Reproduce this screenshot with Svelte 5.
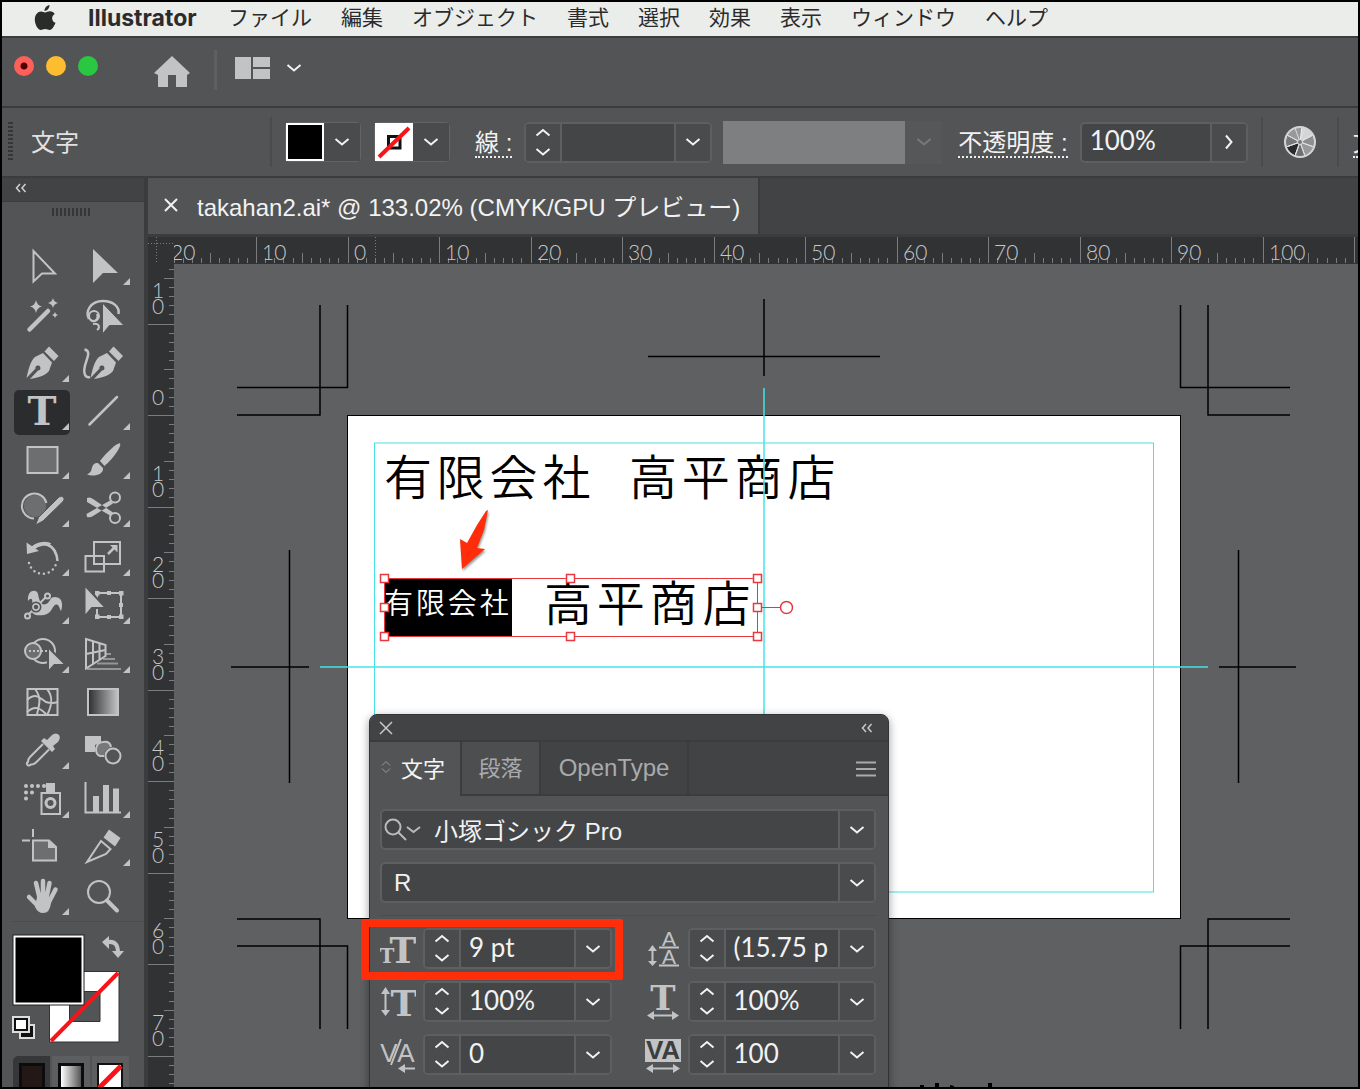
<script lang="ts">
	const menus = ['ファイル', '編集', 'オブジェクト', '書式', '選択', '効果', '表示', 'ウィンドウ', 'ヘルプ'];

	// one ruler unit (10mm) in px, and where 0 sits inside each ruler
	const UNIT = 91.5;
	const ZERO_X = 174.5;
	const ZERO_Y = 152;

	let innerWidth = $state(1360);
	let innerHeight = $state(1089);

	type Tick = { pos: number; kind: number };

	function ticks(zero: number, from: number, to: number): Tick[] {
		const list: Tick[] = [];
		for (let i = from * 10; i <= to * 10; i++) {
			const kind = i % 10 === 0 ? 2 : i % 5 === 0 ? 1 : 0;
			list.push({ pos: Math.round(zero + (i * UNIT) / 10) + 0.5, kind });
		}
		return list;
	}

	function range(from: number, to: number): number[] {
		return Array.from({ length: Math.max(0, to - from + 1) }, (_, i) => i + from);
	}

	const lastX = $derived(Math.floor((innerWidth - 400) / UNIT));
	const lastY = $derived(Math.floor((innerHeight - 418) / UNIT));
	const hTicks = $derived(ticks(ZERO_X - 1, -2, lastX + 2));
	const vTicks = $derived(ticks(ZERO_Y - 1, -2, lastY + 2));
	const hLabels = $derived(range(-2, lastX));
	const vLabels = $derived(range(-1, lastY));

	const F = 'fill="currentColor" stroke="none"';

	const tools = [
		{ name: '選択', sub: false, art: `<path d="M21.5 8V38.500L30 30.500H43Z"/>` },
		{ name: 'ダイレクト選択', sub: true, art: `<path ${F} d="M20 6V40L30 30H45Z"/>` },
		{
			name: '自動選択',
			sub: false,
			art: `<path d="M17.500 37.500L36 19" stroke-width="4.500" stroke-linecap="round"/><path ${F} d="M24 8q1 5.500 6 6.500q-5 1-6 6.500q-1-5.500-6-6.500q5-1 6-6.500zM41 6q.8 4 5 5q-4.200 1-5 5q-.8-4-5-5q4.200-1 5-5zM43 20q.5 2.500 3 3q-2.500.500-3 3q-.500-2.500-3-3q2.500-.500 3-3z"/>`
		},
		{
			name: 'なげなわ',
			sub: false,
			art: `<path d="M16 27C12 20 17 9 30 9C40 9 47 15 45.500 22" stroke-width="2.500"/><circle cx="21" cy="24" r="5"/><path d="M17 27C20 32 26 28 24 22M20 32C27 31 27 36 24 38"/><path fill="currentColor" stroke="#535456" stroke-width="1" d="M29.500 11V42L36.500 33.500H51Z"/>`
		},
		{
			name: 'ペン',
			sub: true,
			art: `<path ${F} d="M14.500 38C16 32 18 21 23 17L31 13L40 22.500L37 31C33 36 25 38 18 39L26 30.500A2.500 2.500 0 1 0 23.500 28.500Z"/><path ${F} d="M37 6.500L46.500 16L42 21L32.500 11.500Z"/>`
		},
		{
			name: '曲線',
			sub: false,
			art: `<path d="M11.500 9.500C21 11 9 25 11.500 33C12 36 14 38 17 37" stroke-width="2.500"/><path ${F} d="M17.500 38C19 32 21 21 26 17L34 13L43 22.500L40 31C36 36 28 38 21 39L29 30.500A2.500 2.500 0 1 0 26.500 28.500Z"/><path ${F} d="M40.500 6.500L50 16L45.500 21L36 11.500Z"/>`
		},
		{ name: '文字', sub: true, active: true, glyph: 'T', art: '' },
		{ name: '直線', sub: true, art: `<path d="M16.500 36.500L44 9" stroke-width="2.500" stroke-linecap="round"/>` },
		{ name: '長方形', sub: true, art: `<rect x="15.500" y="10" width="30" height="26" fill="#6d6e70"/>` },
		{
			name: 'ブラシ',
			sub: true,
			art: `<path ${F} d="M47 6.500C45 5 34 15 27 24L31.500 29C40 22 49 9 47 6.500ZM25 26C19 25 19 32 18 34C17 36 15 37 14 37.500C20 40 31 38 30 31Z"/>`
		},
		{
			name: 'Shaper',
			sub: true,
			art: `<circle cx="23" cy="21" r="11" fill="#6d6e70" stroke="none"/><path d="M22 33.500A12.500 12.500 0 1 1 34.500 18"/><path fill="currentColor" stroke="#535456" stroke-width="1" d="M23.500 40L26.500 32.500L47 12Q50 10 52 13Q52.500 15 51 16.500L31 36Z"/>`
		},
		{
			name: 'はさみ',
			sub: true,
			art: `<circle cx="42" cy="12.500" r="5"/><circle cx="42" cy="33" r="5"/><path ${F} d="M14 13Q17 11.500 20 14L40 27.500L37 30.500L14 17ZM14 32Q17 33 20 31L40 18.500L37 15.500L13.500 29Z"/>`
		},
		{
			name: '回転',
			sub: true,
			art: `<path d="M19 15C28 5 44 9 45.500 27" stroke-width="2.500"/><path d="M21 14C27 9 35 9 38 11" stroke-width="4"/><path ${F} d="M14.500 8.500L15 20L27 17Z"/><path d="M17 29A14 14 0 0 0 44 30" stroke-dasharray="0 5" stroke-width="2.500" stroke-linecap="round"/>`
		},
		{
			name: '拡大・縮小',
			sub: true,
			art: `<rect x="21" y="8" width="26" height="22"/><rect x="12.500" y="22" width="18.500" height="15.500"/><path d="M35 20L42 13" stroke-width="2.500"/><path ${F} d="M37 11H44.500V18.500Z"/>`
		},
		{
			name: '線幅',
			sub: true,
			art: `<path ${F} d="M16 19C15 7 25 7 26 12C27 18 29 24 34 22C39 20 37 15 43 15C51 15 51 24 49 29C47 26 47 21 43 23C40 25 39 32 32 33C24 34 18 33 20 25C21 18 20 14 16 19Z"/><path d="M17 32L34 15"/><circle cx="24" cy="25" r="4.500" stroke="#535456"/><circle cx="24" cy="25" r="3" fill="#535456" stroke-width="1.500"/><circle cx="15.500" cy="34" r="2.500" fill="#535456"/><circle cx="35.500" cy="14" r="2.500" fill="#535456"/>`
		},
		{
			name: '自由変形',
			sub: true,
			art: `<rect x="24" y="11" width="24" height="24"/><path ${F} d="M22 9h4.500v4.500H22zM34 9h4v4h-4zM46 9h4.500v4.500H46zM46 21h4v4h-4zM46 32.500h4.500V37H46zM34 33h4v4h-4zM22 32.500h4.500V37H22z"/><path fill="currentColor" stroke="#535456" d="M11.500 3V35L19 26H33Z"/>`
		},
		{
			name: 'シェイプ形成',
			sub: true,
			art: `<circle cx="31" cy="20" r="12"/><circle cx="21" cy="20" r="8" fill="#6d6e70"/><path d="M17 20H37" stroke-dasharray="2 2"/><path fill="currentColor" stroke="#535456" d="M36 16V41L42.500 34H54Z"/>`
		},
		{
			name: '遠近グリッド',
			sub: true,
			art: `<path d="M13 8L32.500 14V25L13 37.500ZM20 10V33M26.500 12V29M13 23L32.500 19" /><path d="M33 23H38M30 28H42M24 32.500H45M14 38H48" stroke-opacity=".6"/>`
		},
		{
			name: 'メッシュ',
			sub: false,
			art: `<rect x="15.500" y="10" width="30" height="26"/><path d="M23 10C31 20 26 28 25 36M35 10C41 17 40 27 35 36M15 21C24 13 28 19 34 23Q40 25 46 23M15 33C23 26 28 29 34 35"/>`
		},
		{
			name: 'グラデーション',
			sub: false,
			art: `<rect x="15" y="10" width="30" height="26" fill="url(#toolGradient)"/>`
		},
		{
			name: 'スポイト',
			sub: true,
			art: `<path d="M31 17L18 30Q16 32 16 35Q14 36 15.500 38Q17.500 39 19 37.500Q22 37.500 24 35.500L37 22.500" /><path ${F} d="M29 14L32 11L35 13L40 8Q44 5 47 8Q49 11 46 15L41 19L43 22L40 25Z"/>`
		},
		{
			name: 'ブレンド',
			sub: false,
			art: `<path ${F} d="M12 9H28V15L22 18V25H12Z"/><path fill="#77787a" d="M34 29H27Q23 28 23 22Q24 15 30 15Q37 14 38 20"/><circle cx="40" cy="29" r="9" fill="#535456" stroke="none"/><circle cx="40" cy="29" r="7.500"/>`
		},
		{
			name: 'シンボルスプレー',
			sub: true,
			art: `<rect x="29.500" y="17" width="18.500" height="21"/><circle cx="38.500" cy="27" r="4.500" stroke-width="3"/><path ${F} d="M34 7H43V16H34Z"/><path d="M14 10H34M14 16.500H21M14 22.500H15" stroke-width="4" stroke-linecap="round" stroke-dasharray="0 6"/>`
		},
		{
			name: '棒グラフ',
			sub: true,
			art: `<path d="M12.500 6V36.500H48"/><path ${F} d="M20 20h6v17h-6zM30 9h6v28h-6zM40 12.500h6V37h-6z"/>`
		},
		{
			name: 'アートボード',
			sub: false,
			art: `<path d="M21 16.500H37L44 23V36.500H21Z" fill="#6d6e70"/><path ${F} d="M36 16L44.500 24H36Z"/><path d="M21 5V13M10 16.500H18"/>`
		},
		{
			name: 'スライス',
			sub: true,
			art: `<path d="M14 38L28 17L37.500 25L33 30Z"/><path ${F} d="M36 5.500L47.500 14L42 22.500L30.500 13.500Z"/>`
		},
		{
			name: '手のひら',
			sub: true,
			art: `<path d="M28 27L24 10M31 26L31 8M34 27L37.500 10M37 29L43.500 16.500M26 33L17 24" stroke-width="4.500" stroke-linecap="round"/><path ${F} d="M25 24L38 24L39 30Q38 40 31 40Q26 40 23 34Z"/>`
		},
		{
			name: 'ズーム',
			sub: false,
			art: `<circle cx="26" cy="19" r="11"/><path d="M34 27.500L44 37.500" stroke-width="4" stroke-linecap="round"/>`
		}
	];

	const fields = [
		{ id: 'size', label: 'フォントサイズ', value: '9 pt' },
		{ id: 'leading', label: '行送り', value: '(15.75 p' },
		{ id: 'vscale', label: '垂直比率', value: '100%' },
		{ id: 'hscale', label: '水平比率', value: '100%' },
		{ id: 'kerning', label: 'カーニング', value: '0' },
		{ id: 'tracking', label: 'トラッキング', value: '100' }
	];

	const handles = [
		[384, 578], [570, 578], [757, 578],
		[384, 607], [757, 607],
		[384, 636], [570, 636], [757, 636]
	];
</script>

<svelte:window bind:innerWidth bind:innerHeight />

{#snippet chevron()}
	<svg class="chev" viewBox="0 0 16 10"><path d="M1.500 2L8 7.500L14.500 2" /></svg>
{/snippet}

{#snippet stepper(label: string)}
	<span class="stepper">
		<button aria-label="{label}を増やす"><svg class="chev" viewBox="0 0 16 10"><path d="M1.500 7.500L8 2L14.500 7.500" /></svg></button>
		<button aria-label="{label}を減らす">{@render chevron()}</button>
	</span>
{/snippet}

<div class="screen">
	<nav class="menubar">
		<svg class="apple" viewBox="0 0 22 26">
			<path d="M15.500 0C15.700 3 13 6 10.500 6C10.200 3.200 13 .4 15.500 0ZM11 7.500C12.500 7.500 13.800 6.300 16 6.300C18 6.300 19.800 7.400 20.700 8.900C17 11 17.500 16.200 21.500 17.800C20.500 20.700 18 25 15.800 25C14 25 13.500 24 11.200 24C9 24 8.300 25 6.700 25C4 25 .8 19.500 .8 14.500C.8 9.500 4 6.500 7 6.500C8.800 6.500 10 7.500 11 7.500Z" />
		</svg>
		<a class="app-name" href="#app">Illustrator</a>
		{#each menus as menu}
			<a href="#app">{menu}</a>
		{/each}
	</nav>

	<header class="appbar">
		<div class="lights">
			<button class="close" aria-label="閉じる"></button>
			<button class="min" aria-label="しまう"></button>
			<button class="max" aria-label="拡大"></button>
		</div>
		<button class="home" aria-label="ホーム">
			<svg width="36" height="32" viewBox="0 0 36 32"><path d="M18 0L36 17L33 19V31H22V19H14V31H4V19L0 17Z" /></svg>
		</button>
		<i class="rule"></i>
		<button class="workspace" aria-label="ワークスペース">
			<svg width="36" height="24" viewBox="0 0 36 24"><path d="M0 1H16V23H0ZM18 1H35V11H18ZM18 13H35V23H18Z" /></svg>
			{@render chevron()}
		</button>
	</header>

	<div class="control">
		<i class="grip"></i>
		<span class="mode">文字</span>
		<i class="rule"></i>
		<div class="paint">
			<button class="swatch solid" aria-label="塗り"></button>
			<button class="drop" aria-label="塗りのスウォッチ">{@render chevron()}</button>
		</div>
		<div class="paint">
			<button class="swatch" aria-label="線">
				<svg width="38" height="38" viewBox="0 0 38 38">
					<path d="M13.500 13.500H25V25H13.500Z" fill="none" stroke="#111" stroke-width="3" />
					<path d="M4 34L34 5" stroke="#f5141a" stroke-width="4" />
				</svg>
			</button>
			<button class="drop" aria-label="線のスウォッチ">{@render chevron()}</button>
		</div>
		<label class="dotted" for="stroke-width">線 :</label>
		<div class="field stroke">
			{@render stepper('線幅')}
			<input id="stroke-width" type="text" />
			<button class="drop" aria-label="線幅の一覧">{@render chevron()}</button>
		</div>
		<div class="profile">
			<span></span>
			<button aria-label="可変線幅プロファイル" disabled>{@render chevron()}</button>
		</div>
		<label class="dotted" for="opacity">不透明度 :</label>
		<div class="field opacity">
			<input id="opacity" type="text" value="100%" />
			<button class="drop" aria-label="不透明度スライダー">
				<svg class="next" viewBox="0 0 10 16"><path d="M2 1.500L7.500 8L2 14.500" /></svg>
			</button>
		</div>
		<i class="rule"></i>
		<button class="recolor" aria-label="オブジェクトを再配色">
			<svg width="34" height="34" viewBox="0 0 34 34">
				<circle cx="17" cy="17" r="15" fill="#98999b" />
				<path d="M17 17L19 2A15 15 0 0 1 30 10Z" fill="#d4d5d6" />
				<path d="M17 17L30 10A15 15 0 0 1 31 22Z" fill="#8d8e90" />
				<path d="M17 17L12 31A15 15 0 0 1 3 22Z" fill="#2a2b2d" />
				<path d="M17 17L22 31A15 15 0 0 1 12 31Z" fill="#6f7072" />
				<path d="M17 17L3 22A15 15 0 0 1 4 10Z" fill="#77787a" />
				<path d="M17 17L12 3M17 17L22 3M17 17L30 10M17 17L31 22M17 17L22 31M17 17L12 31M17 17L3 22M17 17L4 10" stroke="#dcdddd" />
				<circle cx="17" cy="17" r="15" fill="none" stroke="#d2d3d4" stroke-width="2" />
				<circle cx="17" cy="17" r="2.500" fill="#77787a" stroke="#dcdddd" />
			</svg>
		</button>
		<i class="rule"></i>
		<a class="dotted more" href="#app">文字 :</a>
	</div>

	<main>
		<aside class="tools">
			<button class="collapse" aria-label="パネルを折りたたむ">
				<svg width="12" height="10" viewBox="0 0 12 10"><path d="M5 1L1.500 5L5 9M10.500 1L7 5L10.500 9" /></svg>
			</button>
			<i class="grip wide"></i>
			<div class="grid">
				{#each tools as tool}
					<button class="tool" class:active={tool.active} aria-label={tool.name}>
						<svg viewBox="0 0 61 48">
							<defs>
								<linearGradient id="toolGradient">
									<stop offset="0" stop-color="#2c2d2f" />
									<stop offset="1" stop-color="#c2c3c5" />
								</linearGradient>
							</defs>
							{@html tool.art}
							{#if tool.glyph}<text x="30" y="37" text-anchor="middle">{tool.glyph}</text>{/if}
							{#if tool.sub}<path class="corner" d="M57 35V42H50Z" />{/if}
						</svg>
					</button>
				{/each}
			</div>
			<div class="colors">
				<svg width="122" height="120" viewBox="12 928 122 120">
					<path d="M49.500 971.500H119V1042H49.500ZM69.500 991.500V1021.500H100V991.500Z" fill="#fff" fill-rule="evenodd" stroke="#333" stroke-width="1" />
					<path d="M51 1041L118 973" stroke="#f5141a" stroke-width="4" />
					<rect x="13.500" y="935.500" width="70" height="69" fill="#000" stroke="#222" />
					<rect x="14.500" y="936.500" width="68" height="67" fill="none" stroke="#fff" stroke-width="2" />
					<path d="M108 942C116 941 118 946 118 953" fill="none" stroke="#c2c3c5" stroke-width="4" />
					<path d="M102 942L109 936V949ZM112 951H124L118 958Z" fill="#c2c3c5" stroke="none" />
					<path d="M20 1025H34V1038H20Z" fill="#111" stroke="#ddd" />
					<path d="M13 1017H29V1032H13Z" fill="#111" stroke="#ddd" />
					<path d="M16 1020H26V1029H16Z" fill="#fff" stroke="none" />
				</svg>
			</div>
			<div class="fills">
				<button class="on" aria-label="カラー"><i class="c"></i></button>
				<button aria-label="グラデーション"><i class="g"></i></button>
				<button aria-label="なし">
					<svg width="26" height="40" viewBox="0 0 26 40"><rect x="1" y="1" width="24" height="38" fill="#fff" stroke="#111" stroke-width="2" /><path d="M2 25L24 3" stroke="#f5141a" stroke-width="5" /></svg>
				</button>
			</div>
		</aside>

		<section class="document">
			<div class="tabs">
				<div class="tab">
					<button aria-label="ファイルを閉じる"><svg width="14" height="14" viewBox="0 0 14 14"><path d="M1 1L13 13M13 1L1 13" /></svg></button>
					<span>takahan2.ai* @ 133.02% (CMYK/GPU プレビュー)</span>
				</div>
			</div>
			<div class="work">
				<svg class="ruler corner-box"><path d="M0 6.500H26M8.500 0V26" stroke-dasharray="1 2" /></svg>
				<svg class="ruler h">
					{#each hTicks as t}
						<path d="M{t.pos} {[21, 16, 0][t.kind]}V26" />
					{/each}
					<path d="M201.500 0V26" stroke-dasharray="1 2" />
					{#each hLabels as n}
						<text x={Math.round(ZERO_X + n * UNIT) + 5} y="23">{Math.abs(n * 10)}</text>
					{/each}
				</svg>
				<svg class="ruler v">
					{#each vTicks as t}
						<path d="M{[21, 16, 0][t.kind]} {t.pos}H26" />
					{/each}
					{#each vLabels as n}
						{#each String(Math.abs(n * 10)).split('').reverse() as digit, k}
							<text x="10" y={Math.round(ZERO_Y + n * UNIT) - 11 - k * 16} text-anchor="middle">{digit}</text>
						{/each}
					{/each}
				</svg>
				<div class="canvas">
					<svg class="art" width="1184" height="824" viewBox="174 264 1184 824">
						<rect x="347.500" y="415.500" width="833" height="503" fill="#fff" stroke="#000" stroke-width="1" />
						<!-- trim marks -->
						<g class="marks">
							<path d="M320 305V415H237M347.500 305V387.500H237" />
							<path d="M1180.500 305V387.500H1290M1208 305V415H1290" />
							<path d="M237 919H320V1029M237 946H347.500V1029" />
							<path d="M1290 919H1208V1029M1290 946H1180.500V1029" />
							<path d="M764 299V376M648 356.500H880" />
							<path d="M231 667H309M289.500 550V783" />
							<path d="M1219 667H1296M1238.500 550V783" />
						</g>
						<text class="title" x="384" y="495">有限会社<tspan x="629">高平商店</tspan></text>
						<rect x="385" y="579" width="127" height="57" />
						<text class="title small" x="384" y="614">有限会社</text>
						<text class="title" x="544" y="621">高平商店</text>
						<g class="guides">
							<rect x="374.500" y="443" width="779" height="449" stroke-width="1" />
							<path d="M764 388V946M320 667H1208" />
						</g>
						<g class="bounds">
							<path d="M384.500 578.500H757.500V636.500H384.500ZM757 607.500H780" />
							{#each handles as [x, y]}
								<rect x={x - 3.5} y={y - 3.5} width="8" height="8" />
							{/each}
							<circle cx="786.500" cy="607.500" r="6" />
						</g>
						<path class="pointer" d="M488 510L484 530L477 548L485 549L462 569L460 539L467 543L477 525L486 511Z" />
						<path d="M920 1085h4v3h-4zM935 1083h4v5h-4zM950 1085l4 1v2h-4zM988 1083h4v5h-4z" />
					</svg>

					<div class="panel">
						<div class="panel-bar">
							<button aria-label="パネルを閉じる"><svg width="14" height="14" viewBox="0 0 14 14"><path d="M1 1L13 13M13 1L1 13" /></svg></button>
							<button aria-label="アイコンパネル化"><svg width="12" height="10" viewBox="0 0 12 10"><path d="M5 1L1.500 5L5 9M10.500 1L7 5L10.500 9" /></svg></button>
						</div>
						<div class="panel-tabs">
							<button class="current">
								<svg width="10" height="14" viewBox="0 0 10 14"><path d="M1 5.500L5 1.500L9 5.500M1 8.500L5 12.500L9 8.500" /></svg>文字
							</button>
							<button class="para">段落</button>
							<button class="ot">OpenType</button>
							<button class="burger" aria-label="パネルメニュー"><svg width="22" height="16" viewBox="0 0 22 16"><path d="M1 1.500H21M1 8H21M1 14.500H21" /></svg></button>
						</div>
						<div class="panel-body">
							<div class="field">
								<button class="search" aria-label="フォントを検索">
									<svg width="38" height="24" viewBox="0 0 38 24"><circle cx="10" cy="9" r="7.500" /><path d="M15.500 14.500L23 22M24 9L30.500 14L37 9" /></svg>
								</button>
								<input type="text" aria-label="フォントファミリ" value="小塚ゴシック Pro" />
								<button class="drop" aria-label="フォントの一覧">{@render chevron()}</button>
							</div>
							<div class="field">
								<select aria-label="フォントスタイル"><option>R</option></select>
								<span class="drop">{@render chevron()}</span>
							</div>
							<hr />
							<div class="values">
								{#each fields as f}
									<div class="value">
										<label for={f.id} aria-label={f.label}>
											<svg width="36" height="38" viewBox="0 0 36 38">
												{#if f.id === 'size'}
													<text class="slab" x="23" y="33" font-size="36" text-anchor="middle">T</text>
													<text class="slab" x="7" y="33" font-size="20" text-anchor="middle">T</text>
												{:else if f.id === 'leading'}
													<text class="thin" x="24" y="16" font-size="21" text-anchor="middle">A</text>
													<text class="thin" x="24" y="34" font-size="21" text-anchor="middle">A</text>
													<path d="M14 17.500H34M14 35.500H34M7.500 18V33" /><path class="tip" d="M3 21L7.500 15L12 21ZM3 31L7.500 36L12 31Z" />
												{:else if f.id === 'vscale'}
													<text class="slab" x="24" y="33" font-size="36" text-anchor="middle">T</text>
													<path d="M5.500 8V30" /><path class="tip" d="M1 11L5.500 4L10 11ZM1 27L5.500 33L10 27Z" />
												{:else if f.id === 'hscale'}
													<text class="slab" x="18" y="27" font-size="34" text-anchor="middle">T</text>
													<path d="M6 32.500H30" /><path class="tip" d="M9 28L2 32.500L9 37ZM27 28L34 32.500L27 37Z" />
												{:else if f.id === 'kerning'}
													<text class="thin" x="9" y="26" font-size="26" text-anchor="middle">V</text>
													<text class="thin" x="26" y="26" font-size="26" text-anchor="middle">A</text>
													<path d="M21 3L11 29M23 32.500H35" /><path class="tip" d="M25 28L18 32.500L25 37Z" />
												{:else}
													<rect class="tip" x="0" y="3" width="36" height="23" />
													<text class="va" x="18" y="23" font-size="26" text-anchor="middle">VA</text>
													<path d="M6 32.500H30" /><path class="tip" d="M8 28L1 32.500L8 37ZM28 28L35 32.500L28 37Z" />
												{/if}
											</svg>
										</label>
										<div class="field">
											{@render stepper(f.label)}
											<input id={f.id} type="text" value={f.value} />
											<button class="drop" aria-label="{f.label}の一覧">{@render chevron()}</button>
										</div>
									</div>
								{/each}
							</div>
						</div>
						<i class="callout"></i>
					</div>
				</div>
			</div>
		</section>
	</main>
</div>

<style>
	:global(body) {
		background: #000;
	}

	.screen {
		--bg: #535456;
		--dark: #424345;
		--line: #3b3c3e;
		--edge: #636466;
		--icon: #c2c3c5;
		box-sizing: border-box;
		height: 100vh;
		border: 2px solid #000;
		display: flex;
		flex-direction: column;
		overflow: hidden;
		background: var(--bg);
		color: #f2f2f2;
		font-family: 'Liberation Sans', 'Noto Sans CJK JP', sans-serif;
		font-size: 24px;
	}

	.screen *,
	.screen *::before {
		box-sizing: border-box;
	}

	button,
	input,
	select {
		margin: 0;
		padding: 0;
		border: 0;
		border-radius: 0;
		background: none;
		color: inherit;
		font: inherit;
		min-width: 0;
		appearance: none;
	}

	button {
		display: flex;
		align-items: center;
		justify-content: center;
	}

	svg {
		display: block;
		flex: none;
		fill: none;
		stroke: currentColor;
		stroke-width: 2;
	}

	.chev {
		width: 16px;
		height: 10px;
	}

	.next {
		width: 10px;
		height: 16px;
	}

	/* Menu bar */
	.menubar {
		flex: none;
		display: flex;
		align-items: center;
		gap: 29px;
		height: 34px;
		padding: 0 0 2px 32px;
		background: #ebedeb;
		white-space: nowrap;
		font-family: Inter, 'Noto Sans CJK JP', sans-serif;
		font-size: 21px;
		line-height: 32px;
	}

	.menubar a {
		color: #2b2b2b;
		text-decoration: none;
	}

	.menubar .app-name {
		font-size: 23px;
		font-weight: 700;
		width: 111px;
		margin-left: 3px;
	}

	.apple {
		width: 22px;
		height: 26px;
		fill: #2b2b2b;
		stroke: none;
	}

	/* Application bar */
	.appbar {
		flex: none;
		display: flex;
		align-items: flex-start;
		height: 72px;
		padding: 18px 12px 0;
		border-top: 2px solid var(--line);
		border-bottom: 2px solid var(--line);
	}

	.lights {
		display: flex;
		gap: 12px;
	}

	.lights button {
		width: 20px;
		height: 20px;
		border-radius: 50%;
	}

	.close {
		background: radial-gradient(circle, #4d0000 3px, #fe5f58 4px);
	}

	.min {
		background: #febc2f;
	}

	.max {
		background: #29c840;
	}

	.home {
		margin-left: 56px;
		color: var(--icon);
	}

	.home svg,
	.workspace svg:first-child {
		fill: #c2c3c5;
		stroke: none;
	}

	.appbar .rule {
		width: 3px;
		height: 40px;
		margin: -6px 18px 0 24px;
		background: #5e5f61;
	}

	.workspace {
		gap: 15px;
	}

	/* Control bar */
	.control {
		flex: none;
		display: flex;
		align-items: center;
		height: 70px;
		padding-left: 6px;
		border-bottom: 2px solid var(--line);
		white-space: nowrap;
		overflow: hidden;
	}

	.control > * {
		flex: none;
	}

	.grip {
		width: 5px;
		height: 40px;
		background: repeating-linear-gradient(#353638 0 2px, transparent 2px 4px);
	}

	.mode {
		width: 257px;
		padding: 0 0 4px 18px;
		color: #e2e2e2;
	}

	.control .rule {
		width: 2px;
		height: 50px;
		background: #4a4b4d;
	}

	.control .rule + .paint {
		margin-left: 13px;
	}

	.paint {
		display: flex;
		height: 40px;
		margin-right: 13px;
		border: 1px solid var(--edge);
		border-radius: 4px;
		background: #4a4b4d;
	}

	.swatch {
		width: 38px;
		background: #fff;
	}

	.swatch.solid {
		border: 2px solid #fff;
		background: #000;
	}

	.drop {
		display: flex;
		align-items: center;
		justify-content: center;
		width: 36px;
		flex: none;
		background: #4a4b4d;
	}

	.dotted {
		color: #f2f2f2;
		border-bottom: 2px dotted #eee;
		padding-top: 4px;
		line-height: 26px;
		text-decoration: none;
		margin: 0 12px;
	}

	.field {
		display: flex;
		height: 41px;
		border: 2px solid #5e5f61;
		border-radius: 5px;
		background: #444547;
		overflow: hidden;
	}

	.field input,
	.field select {
		flex: 1;
		width: 0;
		padding-left: 8px;
		outline: 0;
	}

	.field .drop {
		border-left: 2px solid #5e5f61;
	}

	.field .stepper + input,
	.opacity input {
		padding-bottom: 4px;
		font-family: Lato, sans-serif;
		font-size: 26px;
	}

	.stepper {
		display: flex;
		flex-direction: column;
		justify-content: space-between;
		width: 36px;
		padding: 4px 0;
		flex: none;
		background: #4a4b4d;
		border-right: 2px solid #5e5f61;
	}

	.stroke {
		width: 188px;
	}

	.profile {
		display: flex;
		height: 43px;
		margin-left: 11px;
		margin-right: 4px;
		color: #77787a;
	}

	.profile span {
		width: 182px;
		background: #7e7f81;
	}

	.profile button {
		width: 37px;
		background: #565759;
		color: #77787a;
	}

	.opacity {
		width: 168px;
		margin-right: 13px;
	}

	.recolor {
		width: 74px;
	}

	.recolor svg {
		stroke-width: 1;
	}

	.more {
		margin-left: 14px;
	}

	main {
		flex: 1;
		min-height: 0;
		display: flex;
	}

	/* Tools */
	.tools {
		flex: none;
		width: 146px;
		border-right: 4px solid var(--line);
		overflow: hidden;
	}

	.collapse {
		width: 100%;
		height: 24px;
		padding: 0 0 4px 13px;
		justify-content: flex-start;
		background: var(--dark);
		border-bottom: 1px solid var(--line);
		color: #d0d0d0;
	}

	.collapse svg {
		stroke-width: 1.5;
	}

	.grip.wide {
		display: block;
		width: 39px;
		height: 8px;
		margin: 6px 0 27px 50px;
		background: repeating-linear-gradient(90deg, #353638 0 2px, transparent 2px 4px);
	}

	.grid {
		display: grid;
		grid-template-columns: 61px 61px;
		grid-auto-rows: 1fr;
		height: 678px;
		margin-left: 10px;
	}

	.tool {
		position: relative;
		color: var(--icon);
	}

	.tool svg {
		position: relative;
		width: 61px;
		height: 48px;
	}

	.tool.active::before {
		content: '';
		position: absolute;
		inset: 2px 3px 2px 2px;
		border-radius: 5px;
		background: #2b2c2e;
	}

	.tool text {
		fill: var(--icon);
		stroke: none;
		font: 700 39px 'DejaVu Serif', serif;
	}

	.corner {
		fill: var(--icon);
		stroke: none;
	}

	.colors {
		margin-left: 10px;
		padding: 6px 0 8px;
		border-top: 1px solid #4b4c4e;
	}

	.fills {
		display: flex;
		margin-left: 11px;
		width: 118px;
		height: 60px;
		border-radius: 5px 5px 0 0;
		background: #5d5e60;
		overflow: hidden;
	}

	.fills button {
		flex: 1;
		align-items: flex-start;
		padding-top: 7px;
		border-right: 2px solid #535456;
	}

	.fills .on {
		background: #363739;
	}

	.fills i {
		width: 26px;
		height: 40px;
		border: 3px solid #0c0c0c;
	}

	.fills .c {
		background: #231815;
	}

	.fills .g {
		background: linear-gradient(90deg, #fff, #555);
	}

	/* Document */
	.document {
		flex: 1;
		min-width: 0;
		display: flex;
		flex-direction: column;
	}

	.tabs {
		flex: none;
		height: 59px;
		display: flex;
		background: var(--dark);
		border-bottom: 3px solid var(--line);
	}

	.tab {
		display: flex;
		align-items: center;
		gap: 19px;
		width: 612px;
		padding: 0 0 2px 16px;
		background: var(--bg);
		border-right: 2px solid var(--line);
		white-space: nowrap;
	}

	.work {
		flex: 1;
		min-height: 0;
		display: grid;
		grid-template: 27px 1fr / 26px 1fr;
	}

	.ruler {
		width: 100%;
		height: 100%;
		overflow: hidden;
		background: #313234;
		stroke: #7b7c7e;
		stroke-width: 1;
	}

	.ruler text {
		fill: #c6c7c9;
		stroke: none;
		font: 300 21px Lato, sans-serif;
	}

	.canvas {
		position: relative;
		min-width: 0;
		overflow: hidden;
		background: #5f6062;
	}

	.art {
		stroke: none;
		fill: #000;
	}

	.marks {
		fill: none;
		stroke: #000;
		stroke-width: 1.5;
	}

	.title {
		font: 350 48px 'Noto Sans CJK JP', sans-serif;
		letter-spacing: 0.1em;
	}

	.title.small {
		font-size: 29px;
		fill: #fff;
	}

	.guides {
		fill: none;
		stroke: #45e3e6;
		stroke-width: 1.5;
	}

	.bounds {
		fill: none;
		stroke: #e8383d;
		stroke-width: 1;
	}

	.bounds rect,
	.bounds circle {
		fill: #fff;
		stroke-width: 1.5;
	}

	.pointer {
		fill: #ff2d0a;
		filter: drop-shadow(1px 2px 1px rgba(0, 0, 0, 0.4));
	}

	/* Character panel, floating over the artboard */
	.panel {
		position: absolute;
		left: 195px;
		top: 450px;
		width: 520px;
		height: 400px;
		border: 1px solid #333436;
		border-radius: 8px 8px 0 0;
		background: var(--bg);
		box-shadow: 0 3px 10px rgba(0, 0, 0, 0.4);
	}

	.panel-bar {
		display: flex;
		justify-content: space-between;
		align-items: center;
		height: 27px;
		padding: 0 15px 0 9px;
		border-bottom: 2px solid var(--line);
		border-radius: 8px 8px 0 0;
		background: var(--dark);
		color: #c8c9cb;
	}

	.panel-bar svg {
		stroke-width: 1.5;
	}

	.panel-tabs {
		display: flex;
		height: 54px;
		background: linear-gradient(var(--dark) 52px, var(--line) 52px);
		color: #a9aaac;
		font-size: 22px;
	}

	.panel-tabs .current {
		width: 92px;
		gap: 10px;
		padding: 0 4px 4px 0;
		background: var(--bg);
		color: #f5f5f5;
		border-right: 2px solid var(--line);
	}

	.current svg {
		stroke: #999;
		stroke-width: 1;
	}

	.para {
		width: 79px;
		margin-bottom: 2px;
		padding-bottom: 4px;
		background: #4d4e50;
		border-right: 2px solid var(--line);
	}

	.ot {
		width: 148px;
		margin-bottom: 2px;
		border-right: 2px solid var(--line);
		font-size: 24px;
	}

	.burger {
		margin-left: auto;
		padding-right: 11px;
	}

	.panel-body {
		display: flex;
		flex-direction: column;
		gap: 12px;
		padding: 13px 12px 0 10px;
	}

	.search {
		width: 40px;
		color: #b9babc;
	}

	.search + input,
	.panel-body select {
		padding-left: 12px;
	}

	.panel-body hr {
		width: 100%;
		margin: 0;
		border: 0;
		border-top: 1px solid #4b4c4e;
	}

	.values {
		display: grid;
		grid-template-columns: 1fr 1fr;
		gap: 12px 33px;
	}

	.value {
		display: flex;
		align-items: center;
		gap: 7px;
	}

	.value .field {
		flex: 1;
	}

	.value label {
		color: var(--icon);
	}

	.value text {
		fill: currentColor;
		stroke: none;
	}

	.value .slab {
		font-family: 'DejaVu Serif', serif;
		font-weight: 700;
	}

	.value .thin {
		font-family: 'Liberation Sans', sans-serif;
	}

	.value .va {
		font-family: 'Liberation Sans', sans-serif;
		font-weight: 700;
		fill: #3c3d3f;
	}

	.value .tip {
		fill: currentColor;
		stroke: none;
	}

	.callout {
		position: absolute;
		left: -9px;
		top: 204px;
		width: 262px;
		height: 61px;
		border: 8px solid #ff2d0a;
		border-radius: 2px;
		pointer-events: none;
	}
</style>
